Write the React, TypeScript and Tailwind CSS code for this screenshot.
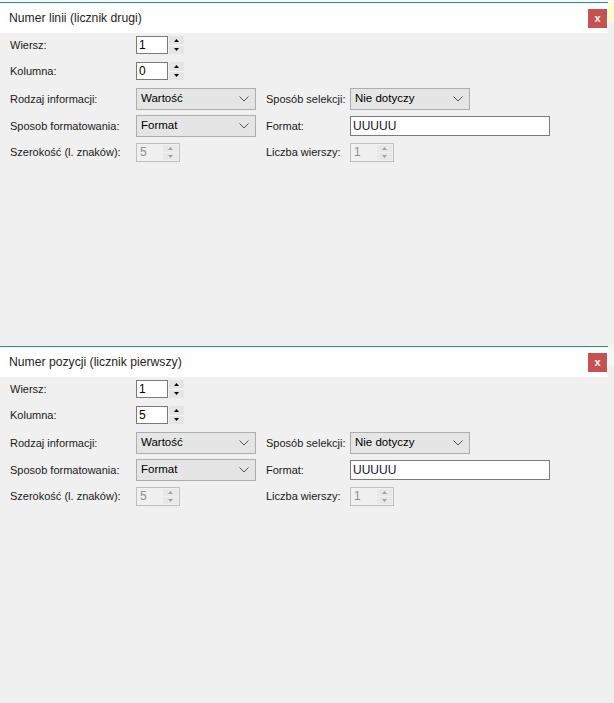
import React from "react";

const font = { fontFamily: '"Liberation Sans", Arial, sans-serif' };

function Arrow({ up, color }: { up?: boolean; color: string }) {
  return (
    <svg width="5" height="3" viewBox="0 0 5 3">
      <path d={up ? "M0 3 L2.5 0 L5 3 Z" : "M0 0 L2.5 3 L5 0 Z"} fill={color} />
    </svg>
  );
}

function Spin({ value, disabled }: { value: string; disabled?: boolean }) {
  if (disabled) {
    return (
      <div className="flex h-[19px] w-[44px] items-stretch border border-[#bfbfbf] bg-[#f0f0f0]">
        <span className="flex-1 pl-[3px] text-[12px] leading-[17px] text-[#8d8d8d]">{value}</span>
        <div className="my-[1px] mr-[1px] flex w-[15px] flex-col">
          <div className="flex flex-1 items-center justify-center bg-[#e8e8e8]"><Arrow up color="#a0a0a0" /></div>
          <div className="h-px bg-[#f0f0f0]" />
          <div className="flex flex-1 items-center justify-center bg-[#e8e8e8]"><Arrow color="#a0a0a0" /></div>
        </div>
      </div>
    );
  }
  return (
    <div className="flex h-[18px] w-[48px] items-stretch">
      <div className="flex-1 border border-[#7a7a7a] bg-white pl-[2px] text-[12px] leading-[16px] text-black">{value}</div>
      <div className="ml-[1px] flex w-[15px] flex-col">
        <div className="flex flex-1 items-center justify-center bg-[#e5e5e5]"><Arrow up color="#000" /></div>
        <div className="h-px bg-[#f8f8f8]" />
        <div className="flex flex-1 items-center justify-center bg-[#e5e5e5]"><Arrow color="#000" /></div>
      </div>
    </div>
  );
}

function Combo({ value }: { value: string }) {
  return (
    <div className="flex h-[22px] w-[120px] items-center border border-[#adadad] bg-[#e5e5e5] pl-[4px] pr-[6px]">
      <span className="flex-1 text-[11.5px] text-black">{value}</span>
      <svg width="10" height="6" viewBox="0 0 10 6" fill="none">
        <path d="M0.5 0.5 L5 5 L9.5 0.5" stroke="#555" strokeWidth="1" />
      </svg>
    </div>
  );
}

function Label({ children, wide }: { children: React.ReactNode; wide?: boolean }) {
  return (
    <span className={`${wide ? "w-[126px]" : "w-[84px]"} shrink-0 whitespace-nowrap text-[11px] text-[#1a1a1a]`}>
      {children}
    </span>
  );
}

function Panel({ title, wiersz, kolumna, first }: { title: string; wiersz: string; kolumna: string; first?: boolean }) {
  return (
    <div className="flex h-[344px] flex-col bg-[#f0f0f0]">
      <div className={`h-[1px] ${first ? "bg-[#f5f5f5]" : "bg-[#f0f0f0]"}`} />
      <div className={`h-[1px] ${first ? "bg-white" : "bg-[#fbf5c8]"}`} />
      <div className="flex">
        <div className="w-[608px] border-t border-[#1f86d6]">
          <div className="flex h-[30px] items-center justify-between bg-white pl-[9px] pr-[1px]">
            <span className="text-[12.2px] text-[#1e1e1e]">{title}</span>
            <div className="flex h-[19px] w-[19px] items-center justify-center bg-[#c75050] text-[11px] font-bold leading-none text-white">x</div>
          </div>
        </div>
        <div className="flex-1">
          <div className={`h-[20px] ${first ? "bg-[#fffdd0]" : "bg-[#f6f6f6]"}`} />
        </div>
      </div>
      <div className="flex flex-col pl-[10px] pt-[3px]">
        <div className="flex h-[18px] items-center">
          <Label wide>Wiersz:</Label>
          <Spin value={wiersz} />
        </div>
        <div className="mt-[8px] flex h-[18px] items-center">
          <Label wide>Kolumna:</Label>
          <Spin value={kolumna} />
        </div>
        <div className="mt-[8px] flex h-[22px] items-center">
          <Label wide>Rodzaj informacji:</Label>
          <Combo value="Wartość" />
          <span className="w-[10px]" />
          <Label>Sposób selekcji:</Label>
          <Combo value="Nie dotyczy" />
        </div>
        <div className="mt-[5px] flex h-[22px] items-center">
          <Label wide>Sposob formatowania:</Label>
          <Combo value="Format" />
          <span className="w-[10px]" />
          <Label>Format:</Label>
          <div className="h-[20px] w-[200px] border border-[#7a7a7a] bg-white pl-[2px] text-[12px] leading-[18px] text-[#1a1030]">UUUUU</div>
        </div>
        <div className="mt-[6px] flex h-[19px] items-center">
          <Label wide>Szerokość (l. znaków):</Label>
          <Spin value="5" disabled />
          <span className="w-[86px]" />
          <Label>Liczba wierszy:</Label>
          <Spin value="1" disabled />
        </div>
      </div>
    </div>
  );
}

export default function App() {
  return (
    <div className="h-[703px] w-[614px] overflow-hidden bg-[#f0f0f0]" style={font}>
      <Panel title="Numer linii (licznik drugi)" wiersz="1" kolumna="0" first />
      <Panel title="Numer pozycji (licznik pierwszy)" wiersz="1" kolumna="5" />
    </div>
  );
}
